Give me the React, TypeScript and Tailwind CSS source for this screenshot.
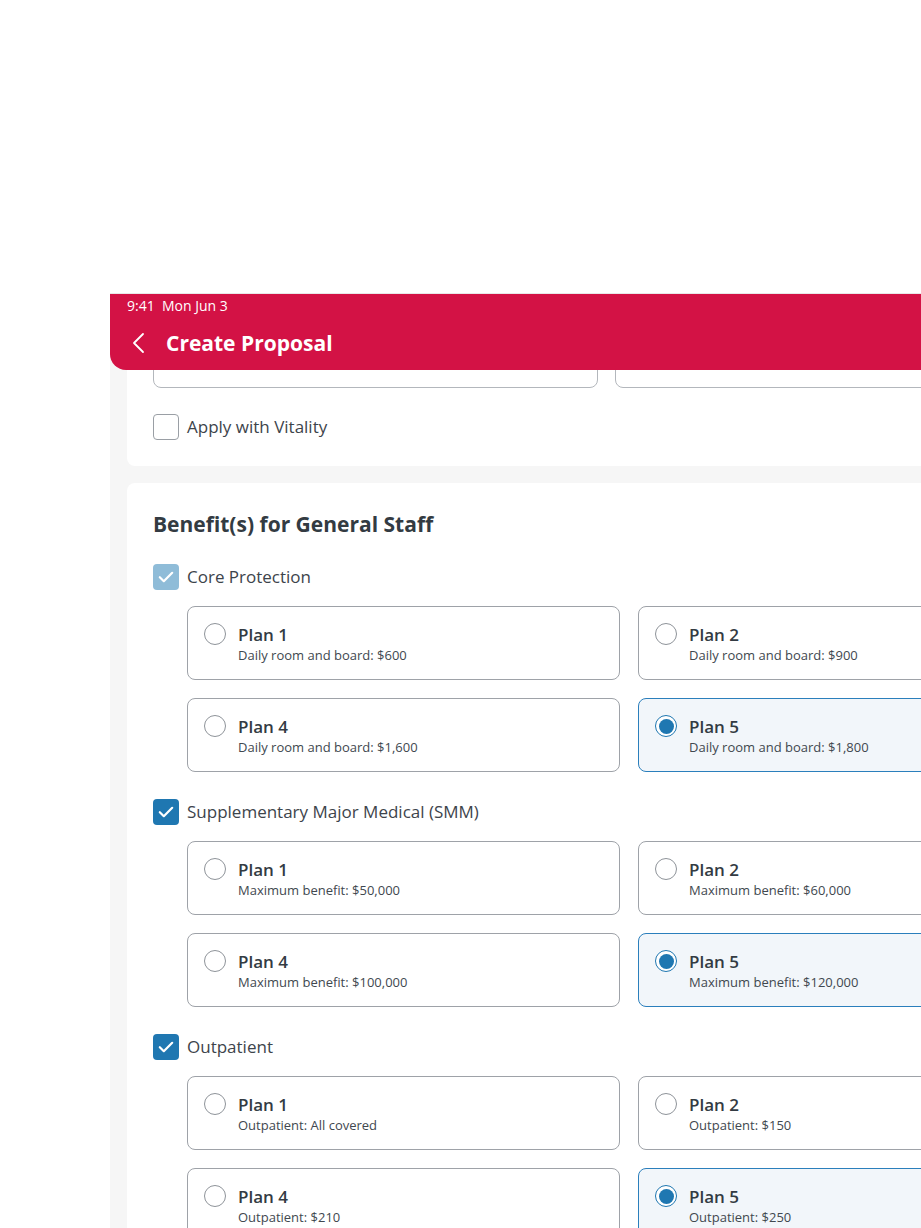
import React from "react";

type Plan = { name: string; desc: string; selected?: boolean };

const groups: { label: string; disabled?: boolean; plans: Plan[] }[] = [
  {
    label: "Core Protection",
    disabled: true,
    plans: [
      { name: "Plan 1", desc: "Daily room and board: $600" },
      { name: "Plan 2", desc: "Daily room and board: $900" },
      { name: "Plan 3", desc: "Daily room and board: $1,200" },
      { name: "Plan 4", desc: "Daily room and board: $1,600" },
      { name: "Plan 5", desc: "Daily room and board: $1,800", selected: true },
      { name: "Plan 6", desc: "Daily room and board: $2,000" },
    ],
  },
  {
    label: "Supplementary Major Medical (SMM)",
    plans: [
      { name: "Plan 1", desc: "Maximum benefit: $50,000" },
      { name: "Plan 2", desc: "Maximum benefit: $60,000" },
      { name: "Plan 3", desc: "Maximum benefit: $80,000" },
      { name: "Plan 4", desc: "Maximum benefit: $100,000" },
      { name: "Plan 5", desc: "Maximum benefit: $120,000", selected: true },
      { name: "Plan 6", desc: "Maximum benefit: $150,000" },
    ],
  },
  {
    label: "Outpatient",
    plans: [
      { name: "Plan 1", desc: "Outpatient: All covered" },
      { name: "Plan 2", desc: "Outpatient: $150" },
      { name: "Plan 3", desc: "Outpatient: $180" },
      { name: "Plan 4", desc: "Outpatient: $210" },
      { name: "Plan 5", desc: "Outpatient: $250", selected: true },
      { name: "Plan 6", desc: "Outpatient: $300" },
    ],
  },
];

function Check({ state }: { state: "off" | "on" | "disabled" }) {
  if (state === "off") {
    return <div className="w-[26px] h-[26px] rounded-[4px] border border-[#9a9fa5] bg-white shrink-0" />;
  }
  return (
    <div
      className={
        "w-[26px] h-[26px] rounded-[4px] flex items-center justify-center shrink-0 " +
        (state === "on" ? "bg-[#1f77b1]" : "bg-[#8fbcd8]")
      }
    >
      <svg width="20" height="20" viewBox="0 0 20 20" fill="none">
        <path d="M3.8 10.2l4 4L16.2 5.8" stroke="white" strokeWidth="2.2" strokeLinecap="round" strokeLinejoin="round" />
      </svg>
    </div>
  );
}

function Radio({ on }: { on?: boolean }) {
  if (on) {
    return (
      <div className="w-[22px] h-[22px] rounded-full border-[1.5px] border-[#1f77b1] bg-white flex items-center justify-center shrink-0">
        <div className="w-[15px] h-[15px] rounded-full bg-[#1f77b1]" />
      </div>
    );
  }
  return <div className="w-[22px] h-[22px] rounded-full border border-[#8e9399] bg-white shrink-0" />;
}

function PlanCard({ p }: { p: Plan }) {
  return (
    <div
      className={
        "w-[433px] h-[74px] rounded-[8px] border flex items-start gap-[12px] pl-[16px] pt-[16px] shrink-0 " +
        (p.selected ? "border-[#2b7fbc] bg-[#f2f6fa]" : "border-[#9ea2a8] bg-white")
      }
    >
      <Radio on={p.selected} />
      <div className="flex flex-col">
        <div className="text-[17px] leading-[23px] font-semibold text-[#333b43]">{p.name}</div>
        <div className="text-[13px] leading-[18px] text-[#41484f]">{p.desc}</div>
      </div>
    </div>
  );
}

export default function App() {
  return (
    <div
      className="w-[921px] h-[1228px] overflow-hidden bg-white relative"
      style={{ fontFamily: '"Open Sans", "Noto Sans", sans-serif' }}
    >
      <div className="h-[293px]" />
      <div className="ml-[110px] w-[1400px] h-[935px] bg-[#f6f6f6] border-t border-[#e8e8e8] flex flex-col">
        <div className="relative z-10 h-[76px] shrink-0 bg-[#d31245] rounded-bl-[16px] text-white flex flex-col">
          <div className="h-[24px] pl-[17px] pt-[2px] text-[14px] leading-[19px] font-medium">9:41&nbsp;&nbsp;Mon Jun 3</div>
          <div className="flex items-center pl-[22px] pt-[11px]">
            <svg width="14" height="22" viewBox="0 0 14 22" fill="none">
              <path d="M11 2L2 11l9 9" stroke="white" strokeWidth="1.8" strokeLinecap="round" strokeLinejoin="round" />
            </svg>
            <div className="ml-[20px] text-[21px] leading-[28px] font-bold">Create Proposal</div>
          </div>
        </div>

        <div className="-mt-[40px] pl-[17px] flex flex-col gap-[17px] shrink-0">
          <div className="bg-white rounded-[8px] pl-[26px] pb-[26px] pt-[10px]">
            <div className="flex gap-[17px]">
              <div className="w-[445px] h-[48px] rounded-[8px] border border-[#b3b7bc]" />
              <div className="w-[445px] h-[48px] rounded-[8px] border border-[#b3b7bc]" />
            </div>
            <div className="flex items-center gap-[8px] mt-[26px]">
              <Check state="off" />
              <div className="text-[17px] leading-[24px] text-[#3d444b]">Apply with Vitality</div>
            </div>
          </div>

          <div className="bg-white rounded-[8px] pl-[26px] pt-[26px] pb-[40px] flex flex-col">
            <div className="text-[21px] leading-[30px] font-bold text-[#333b42]">Benefit(s) for General Staff</div>
            {groups.map((g, gi) => (
              <div key={gi} className={"flex flex-col " + (gi === 0 ? "mt-[25px]" : "mt-[27px]")}>
                <div className="flex items-center gap-[8px]">
                  <Check state={g.disabled ? "disabled" : "on"} />
                  <div className="text-[17px] leading-[24px] text-[#3d444b]">{g.label}</div>
                </div>
                <div className="ml-[34px] mt-[16px] grid grid-cols-[433px_433px_433px] gap-[18px]">
                  {g.plans.map((p, pi) => (
                    <PlanCard key={pi} p={p} />
                  ))}
                </div>
              </div>
            ))}
          </div>
        </div>
      </div>
    </div>
  );
}
